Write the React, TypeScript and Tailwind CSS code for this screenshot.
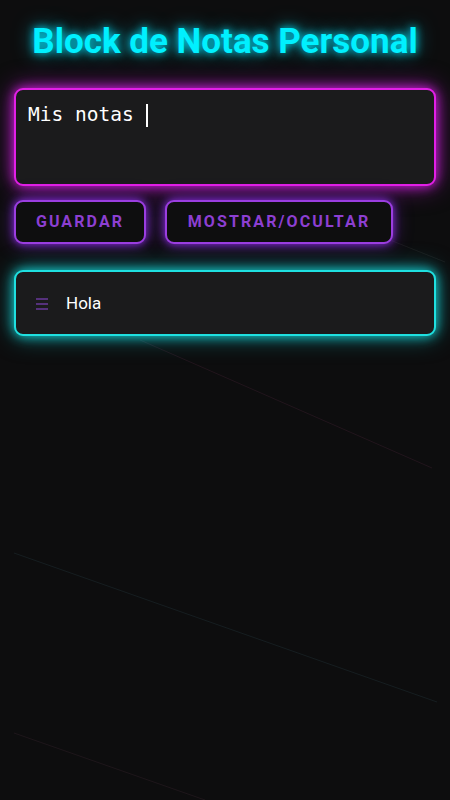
import { useState } from 'react';

type Note = { id: number; text: string };

const initialNotes: Array<Note> = [{ id: 1, text: 'Hola' }];

const BackgroundLines = () => (
  <svg className="pointer-events-none absolute inset-0 h-full w-full" viewBox="0 0 450 800" preserveAspectRatio="none">
    <line x1="140" y1="340" x2="432" y2="468" stroke="#3a1f2e" strokeWidth="1" opacity="0.45" />
    <line x1="380" y1="236" x2="445" y2="262" stroke="#2a2a2a" strokeWidth="1" opacity="0.45" />
    <line x1="14" y1="553" x2="437" y2="702" stroke="#1f2e33" strokeWidth="1" opacity="0.5" />
    <line x1="14" y1="733" x2="205" y2="800" stroke="#2e1f27" strokeWidth="1" opacity="0.5" />
  </svg>
);

export default function App() {
  const [notes] = useState<Array<Note>>(initialNotes);
  const [visible, setVisible] = useState(true);

  return (
    <div className="relative min-h-[800px] w-full overflow-hidden bg-[#0d0d0e] px-[14px] pt-[22px] font-['Roboto',sans-serif]">
      <BackgroundLines />

      <div className="relative flex flex-col">
        <h1 className="text-center text-[35px] font-bold leading-[40px] text-[#00f0ff] [text-shadow:0_0_8px_#00e5ff,0_0_20px_rgba(0,229,255,0.6)]">
          Block de Notas Personal
        </h1>

        {/* Editor */}
        <div className="mt-[26px] h-[98px] rounded-[9px] border-2 border-[#e21fe6] bg-[#1b1b1c] px-[12px] pt-[12px] shadow-[0_0_12px_#d01ee0,0_0_26px_rgba(208,30,224,0.55)]">
          <p className="flex items-center font-['DejaVu_Sans_Mono',monospace] text-[19.5px] leading-[26px] text-white">
            Mis notas&nbsp;
            <span className="ml-px inline-block h-[23px] w-[1.5px] bg-white" />
          </p>
        </div>

        {/* Actions */}
        <div className="mt-[14px] flex gap-[19px]">
          <button className="h-[44px] w-[132px] rounded-[9px] border-2 border-[#9b3ee0] bg-[#0e0e0f] text-[16px] font-bold tracking-[2.1px] text-[#8d3fd2] shadow-[0_0_9px_#8a2be2,0_0_20px_rgba(138,43,226,0.45)]">
            GUARDAR
          </button>
          <button
            onClick={() => setVisible(!visible)}
            className="h-[44px] w-[228px] rounded-[9px] border-2 border-[#9b3ee0] bg-[#0e0e0f] text-[16px] font-bold tracking-[2.1px] text-[#8d3fd2] shadow-[0_0_9px_#8a2be2,0_0_20px_rgba(138,43,226,0.45)]"
          >
            MOSTRAR/OCULTAR
          </button>
        </div>

        {/* Notes */}
        {visible && (
          <ul className="mt-[26px] flex flex-col gap-3">
            {notes.map((note) => (
              <li
                key={note.id}
                className="flex h-[66px] items-center gap-[17px] rounded-[9px] border-2 border-[#1fe0e0] bg-[#1b1b1c] pl-[19px] pt-px shadow-[0_0_12px_#14d4d8,0_0_24px_rgba(20,212,216,0.5)]"
              >
                <svg width="14" height="14" viewBox="0 0 14 14" className="shrink-0">
                  <path d="M1 2h12M1 7h12M1 12h12" stroke="#6a3a9a" strokeWidth="1.6" />
                </svg>
                <span className="text-[17px] text-white">{note.text}</span>
              </li>
            ))}
          </ul>
        )}
      </div>
    </div>
  );
}
